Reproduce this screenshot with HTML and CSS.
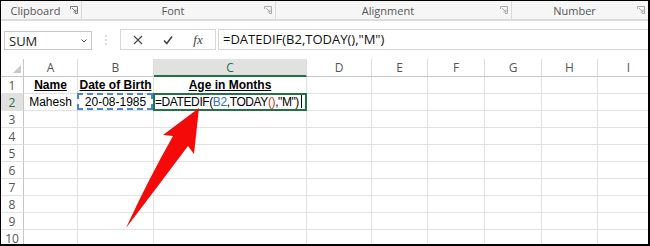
FILE: index.html
```html
<!DOCTYPE html>
<html lang="en">
<head>
    <meta charset="UTF-8">
    <title>DATEDIF - Excel</title>
    <link rel="stylesheet" href="styles.css">
</head>
<body>
    <div class="screen">
        <div class="ribbon">
            <div class="group g-clip"><span>Clipboard</span><svg class="launcher" viewBox="0 0 8 8"><path d="M0.5 3V0.5H7.5V7.5H5M2 2L6 6M6 3.5V6H3.5" fill="none" stroke="#777" stroke-width="1"/></svg></div>
            <div class="group g-font"><span>Font</span><svg class="launcher" viewBox="0 0 8 8"><path d="M0.5 3V0.5H7.5V7.5H5M2 2L6 6M6 3.5V6H3.5" fill="none" stroke="#aaa" stroke-width="1"/></svg></div>
            <div class="group g-align"><span>Alignment</span><svg class="launcher" viewBox="0 0 8 8"><path d="M0.5 3V0.5H7.5V7.5H5M2 2L6 6M6 3.5V6H3.5" fill="none" stroke="#aaa" stroke-width="1"/></svg></div>
            <div class="group g-num"><span>Number</span><svg class="launcher" viewBox="0 0 8 8"><path d="M0.5 3V0.5H7.5V7.5H5M2 2L6 6M6 3.5V6H3.5" fill="none" stroke="#aaa" stroke-width="1"/></svg></div>
        </div>

        <div class="fbar">
            <div class="namebox">
                <span>SUM</span>
                <svg class="caret" viewBox="0 0 6 4"><path d="M0.5 0.5L3 3L5.5 0.5" fill="none" stroke="#555" stroke-width="1"/></svg>
            </div>
            <div class="grip">
                <svg viewBox="0 0 2 10"><circle cx="1" cy="1" r="0.8" fill="#aaa"/><circle cx="1" cy="5" r="0.8" fill="#aaa"/><circle cx="1" cy="9" r="0.8" fill="#aaa"/></svg>
            </div>
            <div class="fbtns">
                <span class="fbtn"><svg viewBox="0 0 10 10"><path d="M1 1L9 9M9 1L1 9" stroke="#444" stroke-width="1.1"/></svg></span>
                <span class="fbtn"><svg viewBox="0 0 10 10"><path d="M1 5.5L3.8 8.5L9 1.5" fill="none" stroke="#444" stroke-width="1.6"/></svg></span>
                <span class="fbtn fx">fx</span>
            </div>
            <div class="finput">=DATEDIF(B2,TODAY(),"M")</div>
        </div>

        <div class="sheet">
            <div class="row head-row">
                <div class="corner"></div><div>A</div><div>B</div><div class="sel">C</div><div>D</div><div>E</div><div>F</div><div>G</div><div>H</div><div>I</div>
            </div>
            <div class="row">
                <div>1</div><div class="hdr">Name</div><div class="hdr">Date of Birth</div><div class="hdr">Age in Months</div><div></div><div></div><div></div><div></div><div></div><div></div>
            </div>
            <div class="row">
                <div class="sel">2</div><div class="center">Mahesh</div><div class="center ref">20-08-1985</div><div class="edit">=DATEDIF(<span class="blue">B2</span>,TODAY<span class="red">()</span>,"M")<i class="cursor"></i></div><div></div><div></div><div></div><div></div><div></div><div></div>
            </div>
            <div class="row"><div>3</div><div></div><div></div><div></div><div></div><div></div><div></div><div></div><div></div><div></div></div>
            <div class="row"><div>4</div><div></div><div></div><div></div><div></div><div></div><div></div><div></div><div></div><div></div></div>
            <div class="row"><div>5</div><div></div><div></div><div></div><div></div><div></div><div></div><div></div><div></div><div></div></div>
            <div class="row"><div>6</div><div></div><div></div><div></div><div></div><div></div><div></div><div></div><div></div><div></div></div>
            <div class="row"><div>7</div><div></div><div></div><div></div><div></div><div></div><div></div><div></div><div></div><div></div></div>
            <div class="row"><div>8</div><div></div><div></div><div></div><div></div><div></div><div></div><div></div><div></div><div></div></div>
            <div class="row"><div>9</div><div></div><div></div><div></div><div></div><div></div><div></div><div></div><div></div><div></div></div>
            <div class="row"><div>10</div><div></div><div></div><div></div><div></div><div></div><div></div><div></div><div></div><div></div></div>
        </div>

        <!-- callout arrow pointing at the formula -->
        <svg class="arrow" viewBox="0 0 650 246">
            <path d="M199 108L194 154L188 146Q155 190 126 228Q148 180 173 136L163 135Z" fill="#f50a0a"/>
        </svg>
    </div>
</body>
</html>
```

FILE: styles.css
```css
* {
    margin: 0;
    padding: 0;
    box-sizing: border-box;
}

body {
    background: #fff;
    font-family: 'Open Sans', 'Noto Sans', sans-serif;
}

.screen {
    position: relative;
    width: 650px;
    height: 246px;
    border: 1px solid #000;
    border-right-width: 2px;
    border-bottom-width: 2px;
    overflow: hidden;
    background: #fff;
}

/* ribbon group labels */
.ribbon {
    display: flex;
    height: 20px;
    background: #f6f6f6;
    border-bottom: 2px solid #dcdcdc;
    font-size: 11px;
    color: #555;
}

.group {
    display: flex;
    align-items: center;
    border-right: 1px solid #dadada;
}

.group span {
    flex: 1;
    text-align: center;
}

.g-clip { width: 81px; }
.g-font { width: 194px; }
.g-align { width: 236px; }
.g-num { flex: 1; border-right: none; }

.launcher {
    width: 8px;
    height: 8px;
    margin-right: 3px;
}

/* formula bar */
.fbar {
    display: flex;
    align-items: flex-start;
    height: 38px;
    padding: 8px 0 0 3px;
    background: #fff;
}

.namebox {
    width: 88px;
    height: 19px;
    margin-top: 2px;
    border: 1px solid #c8c8c8;
    display: flex;
    align-items: center;
    justify-content: space-between;
    padding: 0 4px 0 4px;
    font-size: 13px;
    color: #222;
}

.caret {
    width: 6px;
    height: 4px;
}

.grip {
    width: 28px;
    height: 21px;
    display: flex;
    align-items: center;
    justify-content: center;
}

.grip svg {
    width: 2px;
    height: 10px;
}

.fbtns {
    width: 96px;
    height: 21px;
    border: 1px solid #d6d6d6;
    display: flex;
    align-items: center;
    padding-left: 2px;
}

.fbtn {
    width: 30px;
    display: flex;
    justify-content: center;
    align-items: center;
}

.fbtn svg {
    width: 10px;
    height: 10px;
}

.fx {
    font-family: 'Liberation Serif', serif;
    font-style: italic;
    font-size: 13px;
    color: #444;
}

.finput {
    flex: 1;
    height: 21px;
    margin-left: 2px;
    border: 1px solid #d6d6d6;
    border-right: none;
    padding-left: 4px;
    font-size: 13px;
    line-height: 19px;
    color: #111;
}

/* worksheet grid */
.sheet {
    font-family: 'Liberation Sans', Arial, sans-serif;
    font-size: 12px;
    color: #000;
}

.row {
    display: flex;
}

.row > div {
    flex: none;
    height: 17px;
    line-height: 17px;
    border-right: 1px solid #e2e2e2;
    border-bottom: 1px solid #e2e2e2;
    white-space: nowrap;
    position: relative;
}

.row > :nth-child(1) { width: 23px; }
.row > :nth-child(2) { width: 54px; }
.row > :nth-child(3) { width: 76px; }
.row > :nth-child(4) { width: 153px; }
.row > :nth-child(5) { width: 65px; }
.row > :nth-child(6) { width: 56px; }
.row > :nth-child(7) { width: 57px; }
.row > :nth-child(8) { width: 57px; }
.row > :nth-child(9) { width: 56px; }
.row > :nth-child(10) { width: 62px; }

.row > :first-child {
    border-right-color: #c6c6c6;
    font-family: 'Open Sans', sans-serif;
    font-size: 12px;
    color: #555;
    text-align: center;
}

.head-row > div {
    height: 18px;
    line-height: 17px;
    border-bottom-color: #c6c6c6;
    border-right-color: #dcdcdc;
    font-family: 'Open Sans', sans-serif;
    font-size: 12px;
    color: #555;
    text-align: center;
}

.head-row .sel {
    background: #e1e1e1;
    border-bottom: 2px solid #217346;
    color: #217346;
}

.row > .sel {
    background: #e1e1e1;
    color: #217346;
}

.corner::after {
    content: '';
    position: absolute;
    right: 2px;
    bottom: 3px;
    border-left: 8px solid transparent;
    border-bottom: 8px solid #c9c9c9;
}

.hdr {
    font-weight: bold;
    text-decoration: underline;
    text-align: center;
}

.center {
    text-align: center;
}

.ref::after {
    content: '';
    position: absolute;
    top: -1px;
    left: -1px;
    right: 0;
    bottom: 0;
    border: 2px dashed #4a84d2;
}

.edit {
    padding-left: 1px;
    letter-spacing: -0.4px;
}

.edit::after {
    content: '';
    position: absolute;
    top: -1px;
    left: -1px;
    right: -1px;
    bottom: -1px;
    border: 2px solid #217346;
}

.blue { color: #3a70c0; }
.red { color: #c0392b; }

.cursor {
    display: inline-block;
    width: 1px;
    height: 13px;
    background: #000;
    margin-left: 2px;
    vertical-align: -2px;
}

.arrow {
    position: absolute;
    top: -1px;
    left: -1px;
    width: 650px;
    height: 246px;
}
```
